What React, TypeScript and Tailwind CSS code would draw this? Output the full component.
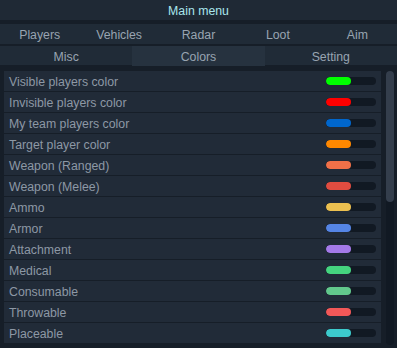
import React from 'react';

const topTabs = ['Players', 'Vehicles', 'Radar', 'Loot', 'Aim'];
const subTabs = ['Misc', 'Colors', 'Setting'];

const colorRows: { label: string; color: string }[] = [
  { label: 'Visible players color', color: '#00ff00' },
  { label: 'Invisible players color', color: '#ff0000' },
  { label: 'My team players color', color: '#0066cc' },
  { label: 'Target player color', color: '#ff8800' },
  { label: 'Weapon (Ranged)', color: '#f07048' },
  { label: 'Weapon (Melee)', color: '#e04c40' },
  { label: 'Ammo', color: '#ecc050' },
  { label: 'Armor', color: '#5585e5' },
  { label: 'Attachment', color: '#a47ae8' },
  { label: 'Medical', color: '#45d47f' },
  { label: 'Consumable', color: '#62c88c' },
  { label: 'Throwable', color: '#f25858' },
  { label: 'Placeable', color: '#3ccacc' },
];

const App: React.FC = () => {
  return (
    <div
      className="w-[397px] h-[348px] overflow-hidden bg-[#161e28] flex flex-col text-[12.3px]"
      style={{ fontFamily: '"Liberation Sans", Arial, sans-serif' }}
    >
      <div className="h-[20px] pt-[2px] bg-[#1f2935] flex items-center justify-center text-[#a9e6ee]">
        Main menu
      </div>
      <div className="h-[4px]" />
      <div className="h-[20px] bg-[#202b37] grid grid-cols-5 text-[#98a4b1]">
        {topTabs.map(t => (
          <div key={t} className="flex items-center justify-center pt-[2px]">
            {t}
          </div>
        ))}
      </div>
      <div className="h-[2px]" />
      <div className="h-[19px] bg-[#202b37] grid grid-cols-3 text-[#98a4b1]">
        {subTabs.map(t => (
          <div
            key={t}
            className={`flex items-center justify-center pt-[2px] ${t === 'Colors' ? 'bg-[#26323f]' : ''}`}
          >
            {t}
          </div>
        ))}
      </div>
      <div className="h-[6px]" />
      <div className="flex flex-1 min-h-0 pl-[4px]">
        <div className="flex-1 flex flex-col">
          {colorRows.map(row => (
            <div
              key={row.label}
              className="h-[21px] shrink-0 bg-[#212b38] border-b border-[#161e28] flex items-center pl-[5px] pr-[5px]"
            >
              <span className="flex-1 text-[#8d98a5] pt-[2px]">{row.label}</span>
              <div className="w-[50px] h-[8px] rounded-full bg-[#111923] overflow-hidden">
                <div className="w-[25px] h-full rounded-full" style={{ backgroundColor: row.color }} />
              </div>
            </div>
          ))}
        </div>
        <div className="w-[16px] pl-[5px] pr-[3px] pb-[3px]">
          <div className="h-full rounded-full bg-[#111923] flex flex-col">
            <div className="h-[131px] rounded-full bg-[#343e4c]" />
          </div>
        </div>
      </div>
    </div>
  );
};

export default App;
